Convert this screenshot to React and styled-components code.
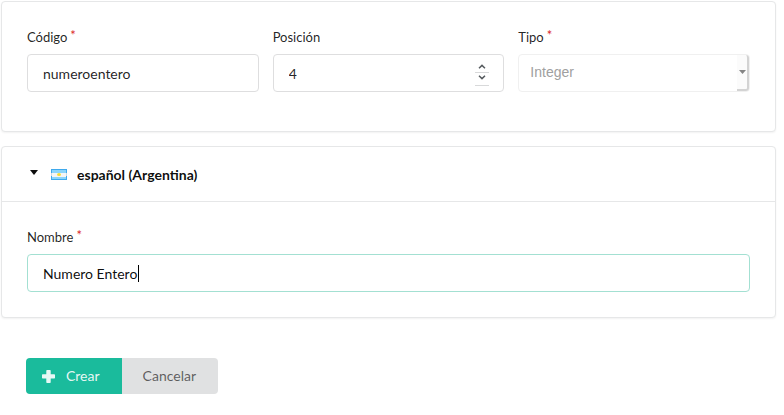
import React from "react";
import styled, { createGlobalStyle } from "styled-components";

const GlobalStyle = createGlobalStyle`
  *, *::before, *::after { box-sizing: border-box; }
  body {
    margin: 0;
    background: #fff;
    color: rgba(0, 0, 0, 0.87);
    font-family: Lato, "Liberation Sans", sans-serif;
    font-size: 14px;
    line-height: 18px;
  }
  button, input, select { font: inherit; }
`;

const Form = styled.form`
  display: flex;
  flex-direction: column;
  gap: 14px;
  padding: 1px 8px 20px 1px;
`;

const Panel = styled.section`
  border: 1px solid #e6e7e8;
  border-radius: 4px;
  background: #fff;
  box-shadow: 0 1px 2px rgba(34, 36, 38, 0.06);
`;

const PanelBody = styled.div`
  display: grid;
  grid-template-columns: repeat(${(p) => p.$columns}, minmax(0, 1fr));
  gap: 14px;
  padding: 26px 25px ${(p) => p.$bottom}px;
`;

const Field = styled.div`
  display: flex;
  flex-direction: column;
  gap: 8px;
`;

const Label = styled.label`
  display: flex;
  gap: 3px;
  font-size: 13px;
  line-height: 18px;
`;

const Required = styled.span`
  color: #db2828;
  line-height: 14px;
`;

const Control = styled.div`
  position: relative;
  display: flex;
  height: 38px;
`;

const TextInput = styled.input`
  flex: 1;
  min-width: 0;
  padding: 2px 15px 0;
  border: 1px solid ${(p) => (p.$active ? "#a3e0d2" : "#dededf")};
  border-radius: 4px;
  outline: none;
  background: #fff;
  color: ${(p) => (p.$active ? "rgba(0, 0, 0, 0.95)" : "rgba(0, 0, 0, 0.87)")};
  appearance: textfield;
  caret-color: transparent;

  &::-webkit-inner-spin-button { display: none; }
`;

const Caret = styled.span`
  position: absolute;
  left: 111px;
  top: 11px;
  width: 1px;
  height: 17px;
  background: #000;
`;

const Stepper = styled.div`
  position: absolute;
  right: 15px;
  top: 6px;
  width: 14px;
`;

const StepButton = styled.button`
  display: flex;
  align-items: flex-end;
  justify-content: center;
  width: 100%;
  height: 13px;
  padding: 0 0 ${(p) => (p.$down ? 5 : 3)}px;
  border: 0;
  border-bottom: 1px solid #d8d9da;
  background: transparent;
  color: #555a5e;
`;

const Select = styled.select`
  flex: 1;
  min-width: 0;
  padding: 0 30px 3px 11px;
  border: 1px solid #f0f0f0;
  border-radius: 4px;
  appearance: none;
  background: #fff;
  color: #a0a0a0;
  font-family: "Liberation Sans", Arial, sans-serif;
  opacity: 1;
`;

const SelectArrow = styled.span`
  position: absolute;
  inset: 1px 1px 1px auto;
  display: flex;
  align-items: center;
  justify-content: center;
  width: 12px;
  border: solid #d3d3d3;
  border-width: 0 2px 2px 0;
  border-radius: 0 3px 3px 0;
  background: #fbfbfb;
  color: #858585;
  pointer-events: none;
`;

const LocaleToggle = styled.button`
  display: flex;
  align-items: center;
  width: 100%;
  height: 55px;
  padding: 0 27px;
  border: 0;
  border-bottom: 1px solid #e6e7e8;
  background: transparent;
  color: rgba(0, 0, 0, 0.95);
  font-weight: 700;
  text-align: left;

  svg + svg { margin: 0 10px 0 12px; }
`;

const LocaleName = styled.span`
  padding-top: 2px;
`;

const Actions = styled.div`
  display: flex;
  padding: 26px 25px 0;
`;

const Button = styled.button`
  display: flex;
  align-items: center;
  gap: 11px;
  height: 36px;
  padding: 0 22px 0 ${(p) => (p.$primary ? 16 : 21)}px;
  border: 0;
  border-radius: ${(p) => (p.$primary ? "4px 0 0 4px" : "0 4px 4px 0")};
  background: ${(p) => (p.$primary ? "#1abb9c" : "#e0e1e2")};
  color: ${(p) => (p.$primary ? "rgba(255, 255, 255, 0.9)" : "rgba(0, 0, 0, 0.6)")};
`;

function Chevron({ down }) {
  return (
    <svg width="8" height="5" viewBox="0 0 8 5" fill="none" aria-hidden="true">
      <path
        d={down ? "M1 .8 4 3.6 7 .8" : "M1 4.2 4 1.4 7 4.2"}
        stroke="currentColor"
        strokeWidth="1.5"
      />
    </svg>
  );
}

function ArgentinaFlag() {
  return (
    <svg width="16" height="11" viewBox="0 0 16 11" aria-hidden="true">
      <path d="M0 0h16v11H0z" fill="#3fa9ec" />
      <path d="M1 1h14v3H1zM1 8h14v2H1z" fill="#8bd5fb" />
      <path d="M1 4h14v4H1z" fill="#f5f5f5" />
      <path d="M0 4h1v3H0zM15 4h1v3h-1z" fill="#cfd8df" />
      <ellipse cx="8" cy="5.5" rx="2" ry="1.5" fill="#f5dc35" />
    </svg>
  );
}

function FieldLabel({ htmlFor, required, children }) {
  return (
    <Label htmlFor={htmlFor}>
      {children}
      {required && <Required>*</Required>}
    </Label>
  );
}

export default function App() {
  return (
    <>
      <GlobalStyle />
      <Form onSubmit={(e) => e.preventDefault()}>
        <Panel>
          <PanelBody $columns={3} $bottom={39}>
            <Field>
              <FieldLabel htmlFor="code" required>Código</FieldLabel>
              <Control>
                <TextInput id="code" type="text" defaultValue="numeroentero" />
              </Control>
            </Field>
            <Field>
              <FieldLabel htmlFor="position">Posición</FieldLabel>
              <Control>
                <TextInput id="position" type="number" defaultValue="4" />
                <Stepper>
                  <StepButton type="button" aria-label="Aumentar"><Chevron /></StepButton>
                  <StepButton type="button" aria-label="Disminuir" $down><Chevron down /></StepButton>
                </Stepper>
              </Control>
            </Field>
            <Field>
              <FieldLabel htmlFor="type" required>Tipo</FieldLabel>
              <Control>
                <Select id="type" disabled defaultValue="integer">
                  <option value="integer">Integer</option>
                </Select>
                <SelectArrow>
                  <svg width="7" height="4" viewBox="0 0 7 4" aria-hidden="true">
                    <path d="M0 0h7L3.5 4z" fill="currentColor" />
                  </svg>
                </SelectArrow>
              </Control>
            </Field>
          </PanelBody>
        </Panel>

        <Panel>
          <LocaleToggle type="button" aria-expanded="true">
            <svg width="10" height="10" viewBox="0 0 10 10" aria-hidden="true">
              <path d="M1 1h8L5 6z" fill="currentColor" />
            </svg>
            <ArgentinaFlag />
            <LocaleName>español (Argentina)</LocaleName>
          </LocaleToggle>
          <PanelBody $columns={1} $bottom={25}>
            <Field>
              <FieldLabel htmlFor="name" required>Nombre</FieldLabel>
              <Control>
                <TextInput id="name" type="text" defaultValue="Numero Entero" $active />
                <Caret />
              </Control>
            </Field>
          </PanelBody>
        </Panel>

        <Actions>
          <Button type="submit" $primary>
            <svg width="13" height="13" viewBox="0 0 13 13" aria-hidden="true">
              <path
                d="M5 0h3q.7 0 .7.7v3.6h3.6q.7 0 .7.7v2.700q0 .7-.7.7H8.700v3.900q0 .7-.7.7H5q-.7 0-.7-.7V8.400H.7Q0 8.400 0 7.700V5q0-.7.7-.7h3.600V.7Q4.300 0 5 0z"
                fill="currentColor"
              />
            </svg>
            Crear
          </Button>
          <Button type="button">Cancelar</Button>
        </Actions>
      </Form>
    </>
  );
}
